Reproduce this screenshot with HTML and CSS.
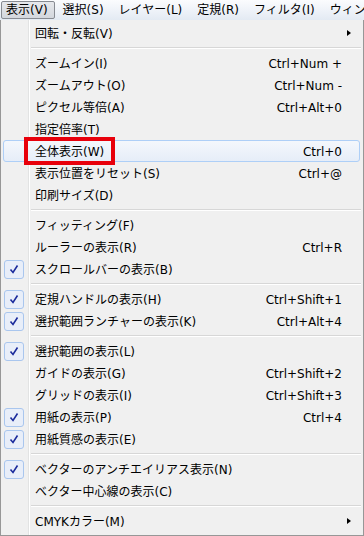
FILE: index.html
```html
<!DOCTYPE html>
<html lang="ja">
<head>
<meta charset="utf-8">
<link rel="stylesheet" href="styles.css">
</head>
<body>
<div class="menubar">
  <div class="mb-item active">表示(V)</div>
  <div class="mb-item">選択(S)</div>
  <div class="mb-item">レイヤー(L)</div>
  <div class="mb-item">定規(R)</div>
  <div class="mb-item">フィルタ(I)</div>
  <div class="mb-item">ウィンドウ(W)</div>
</div>
<div class="menu">
  <div class="item"><span class="chk"></span><span class="label">回転・反転(V)</span><span class="key"></span><span class="sub"><i class="tri"></i></span></div>
  <div class="sep"></div>
  <div class="item"><span class="chk"></span><span class="label">ズームイン(I)</span><span class="key">Ctrl+Num +</span><span class="sub"></span></div>
  <div class="item"><span class="chk"></span><span class="label">ズームアウト(O)</span><span class="key">Ctrl+Num -</span><span class="sub"></span></div>
  <div class="item"><span class="chk"></span><span class="label">ピクセル等倍(A)</span><span class="key">Ctrl+Alt+0</span><span class="sub"></span></div>
  <div class="item"><span class="chk"></span><span class="label">指定倍率(T)</span><span class="key"></span><span class="sub"></span></div>
  <div class="item hover"><span class="chk"></span><span class="label">全体表示(W)</span><span class="key">Ctrl+0</span><span class="sub"></span></div>
  <div class="item"><span class="chk"></span><span class="label">表示位置をリセット(S)</span><span class="key">Ctrl+@</span><span class="sub"></span></div>
  <div class="item"><span class="chk"></span><span class="label">印刷サイズ(D)</span><span class="key"></span><span class="sub"></span></div>
  <div class="sep"></div>
  <div class="item"><span class="chk"></span><span class="label">フィッティング(F)</span><span class="key"></span><span class="sub"></span></div>
  <div class="item"><span class="chk"></span><span class="label">ルーラーの表示(R)</span><span class="key">Ctrl+R</span><span class="sub"></span></div>
  <div class="item"><span class="chk on"><svg viewBox="0 0 20 19" width="20" height="19"><path d="M6.5 9.5 L9 12.5 L13.5 5.5" fill="none" stroke="#1b2b9c" stroke-width="1.6"/></svg></span><span class="label">スクロールバーの表示(B)</span><span class="key"></span><span class="sub"></span></div>
  <div class="sep"></div>
  <div class="item"><span class="chk on"><svg viewBox="0 0 20 19" width="20" height="19"><path d="M6.5 9.5 L9 12.5 L13.5 5.5" fill="none" stroke="#1b2b9c" stroke-width="1.6"/></svg></span><span class="label">定規ハンドルの表示(H)</span><span class="key">Ctrl+Shift+1</span><span class="sub"></span></div>
  <div class="item"><span class="chk on"><svg viewBox="0 0 20 19" width="20" height="19"><path d="M6.5 9.5 L9 12.5 L13.5 5.5" fill="none" stroke="#1b2b9c" stroke-width="1.6"/></svg></span><span class="label">選択範囲ランチャーの表示(K)</span><span class="key">Ctrl+Alt+4</span><span class="sub"></span></div>
  <div class="sep"></div>
  <div class="item"><span class="chk on"><svg viewBox="0 0 20 19" width="20" height="19"><path d="M6.5 9.5 L9 12.5 L13.5 5.5" fill="none" stroke="#1b2b9c" stroke-width="1.6"/></svg></span><span class="label">選択範囲の表示(L)</span><span class="key"></span><span class="sub"></span></div>
  <div class="item"><span class="chk"></span><span class="label">ガイドの表示(G)</span><span class="key">Ctrl+Shift+2</span><span class="sub"></span></div>
  <div class="item"><span class="chk"></span><span class="label">グリッドの表示(I)</span><span class="key">Ctrl+Shift+3</span><span class="sub"></span></div>
  <div class="item"><span class="chk on"><svg viewBox="0 0 20 19" width="20" height="19"><path d="M6.5 9.5 L9 12.5 L13.5 5.5" fill="none" stroke="#1b2b9c" stroke-width="1.6"/></svg></span><span class="label">用紙の表示(P)</span><span class="key">Ctrl+4</span><span class="sub"></span></div>
  <div class="item"><span class="chk on"><svg viewBox="0 0 20 19" width="20" height="19"><path d="M6.5 9.5 L9 12.5 L13.5 5.5" fill="none" stroke="#1b2b9c" stroke-width="1.6"/></svg></span><span class="label">用紙質感の表示(E)</span><span class="key"></span><span class="sub"></span></div>
  <div class="sep"></div>
  <div class="item"><span class="chk on"><svg viewBox="0 0 20 19" width="20" height="19"><path d="M6.5 9.5 L9 12.5 L13.5 5.5" fill="none" stroke="#1b2b9c" stroke-width="1.6"/></svg></span><span class="label">ベクターのアンチエイリアス表示(N)</span><span class="key"></span><span class="sub"></span></div>
  <div class="item"><span class="chk"></span><span class="label">ベクター中心線の表示(C)</span><span class="key"></span><span class="sub"></span></div>
  <div class="sep"></div>
  <div class="item"><span class="chk"></span><span class="label">CMYKカラー(M)</span><span class="key"></span><span class="sub"><i class="tri"></i></span></div>
  <div class="redbox"></div>
</div>
</body>
</html>
```
FILE: styles.css
```css
* { box-sizing: border-box; }
html, body {
  margin: 0;
  padding: 0;
  width: 364px;
  height: 536px;
  overflow: hidden;
  background: #f0f0f0;
  font-family: "DejaVu Sans", "Noto Sans CJK JP", sans-serif;
  font-size: 12px;
  color: #000;
}
.menubar {
  height: 20px;
  display: flex;
  align-items: stretch;
  gap: 1px;
  padding: 1px 0 1px 1px;
  background: linear-gradient(#fbfcfe, #e3eaf3);
  white-space: nowrap;
  overflow: hidden;
}
.mb-item {
  padding: 0 6px 0 6px;
  line-height: 17px;
  border: 1px solid transparent;
  border-radius: 2px;
  flex: none;
}
.mb-item.active {
  border-color: #878b92;
  background: linear-gradient(#e6e8ec, #d3d7dd);
  padding: 0 6px 0 4px;
}
.menu {
  position: relative;
  height: 516px;
  border: 1px solid #979797;
  border-top: none;
  padding: 2px;
  background:
    linear-gradient(to right, transparent 27px, #e2e3e3 27px, #e2e3e3 28px, #ffffff 28px, #ffffff 29px, transparent 29px),
    #f0f0f0;
}
.item {
  height: 22px;
  display: flex;
  align-items: center;
  border: 1px solid transparent;
  border-radius: 3px;
  margin-right: 1px;
}
.item.hover {
  border-color: #aecff7;
  background: linear-gradient(#f4f7fc, #e6edf8);
}
.chk {
  width: 20px;
  height: 19px;
  margin-left: 0;
  margin-right: 11px;
  flex: none;
  border: 1px solid transparent;
  border-radius: 3px;
}
.chk.on {
  border-color: #a9c6ee;
  background: #e8eef9;
}
.chk svg { display: block; margin: -1px; }
.label {
  flex: 1;
  line-height: 20px;
  margin-top: 2px;
  white-space: nowrap;
}
.key {
  flex: none;
  line-height: 20px;
  margin-top: 2px;
  white-space: nowrap;
}
.sub {
  width: 17px;
  flex: none;
  display: flex;
  align-items: center;
}
.tri {
  display: block;
  width: 0;
  height: 0;
  margin-left: 5px;
  border-left: 4px solid #000;
  border-top: 3.5px solid transparent;
  border-bottom: 3.5px solid transparent;
}
.sep {
  height: 8px;
  margin-left: 28px;
  margin-right: 0;
  background: linear-gradient(transparent 3px, #d7d7d7 3px, #d7d7d7 4px, #ffffff 4px, #ffffff 5px, transparent 5px);
}
.redbox {
  position: absolute;
  left: 23px;
  top: 117px;
  width: 91px;
  height: 28px;
  border: 4px solid #e8000b;
}
```
